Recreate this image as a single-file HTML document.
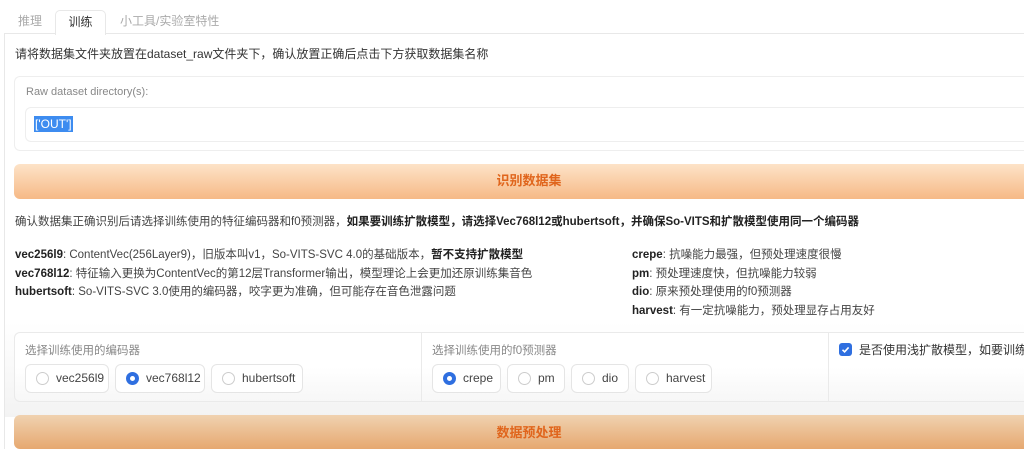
<!DOCTYPE html>
<html><head><meta charset="utf-8"><style>
*,*:before,*:after{box-sizing:border-box;margin:0;padding:0}
html,body{width:1024px;height:449px;overflow:hidden}
body{background:#fff;font-family:"Liberation Sans","Noto Sans CJK SC",sans-serif;color:#333;font-size:12px}
#w{position:relative;width:1024px;height:449px;overflow:hidden}
.a{position:absolute;white-space:nowrap}
.tab{position:absolute;top:10px;height:24px;line-height:22px;font-size:12px;color:#aaa}
.btn{position:absolute;left:14px;width:1010px;border-radius:6px 0 0 6px;background:linear-gradient(#fde3c8,#f6b986);color:#e0651c;font-weight:bold;font-size:13px;text-align:center;line-height:34px;padding-left:20px}
.radio{position:absolute;top:364px;height:29px;border:1px solid #e5e5e5;border-radius:6px;background:#fff;font-size:12px;line-height:27px;color:#444;padding-left:30px}
.radio:before{content:"";position:absolute;left:10px;top:7px;width:13px;height:13px;border:1px solid #ccc;border-radius:50%;background:#fff}
.radio.on:before{border:4px solid #2f6fe0}
b{color:#222}
</style></head><body><div id="w">
<div class="tab" style="left:18px">推理</div>
<div class="a" style="left:55px;top:10px;width:51px;height:25px;border:1px solid #e8e8e8;border-bottom:none;border-radius:5px 5px 0 0;background:#fff;text-align:center;line-height:22px;color:#333;font-size:12px;z-index:2">训练</div>
<div class="tab" style="left:120px">小工具/实验室特性</div>
<div class="a" style="left:4px;top:33px;width:1020px;height:416px;border-left:1px solid #e8e8e8;border-top:1px solid #e8e8e8"></div>
<div class="a" style="left:15px;top:45px;font-size:12px;color:#333">请将数据集文件夹放置在dataset_raw文件夹下，确认放置正确后点击下方获取数据集名称</div>
<div class="a" style="left:14px;top:76px;width:1010px;height:75px;border:1px solid #eee;border-right:none;border-radius:6px 0 0 6px;background:#fff"></div>
<div class="a" style="left:26px;top:86px;font-size:11px;color:#888">Raw dataset directory(s):</div>
<div class="a" style="left:25px;top:107px;width:999px;height:35px;border:1px solid #eee;border-right:none;border-radius:6px 0 0 6px;background:#fff"></div>
<div class="a" style="left:34px;top:116px;background:#3d8cf0;color:#fff;font-size:12px;padding:0 1px;line-height:16px">['OUT']</div>
<div class="btn" style="top:164px;height:35px">识别数据集</div>
<div class="a" style="left:15px;top:213px;font-size:11.5px;color:#444">确认数据集正确识别后请选择训练使用的特征编码器和f0预测器，<b>如果要训练扩散模型，请选择Vec768l12或hubertsoft，并确保So-VITS和扩散模型使用同一个编码器</b></div>
<div class="a" style="left:15px;top:246px;font-size:11.5px;color:#444;line-height:18.5px"><b>vec256l9</b>: ContentVec(256Layer9)，旧版本叫v1，So-VITS-SVC 4.0的基础版本，<b>暂不支持扩散模型</b><br><b>vec768l12</b>: 特征输入更换为ContentVec的第12层Transformer输出，模型理论上会更加还原训练集音色<br><b>hubertsoft</b>: So-VITS-SVC 3.0使用的编码器，咬字更为准确，但可能存在音色泄露问题</div>
<div class="a" style="left:632px;top:246px;font-size:11.5px;color:#444;line-height:18.5px"><b>crepe</b>: 抗噪能力最强，但预处理速度很慢<br><b>pm</b>: 预处理速度快，但抗噪能力较弱<br><b>dio</b>: 原来预处理使用的f0预测器<br><b>harvest</b>: 有一定抗噪能力，预处理显存占用友好</div>
<div class="a" style="left:5px;top:322px;width:1019px;height:95px;background:linear-gradient(#fff,#f3f3f3)"></div>
<div class="a" style="left:14px;top:332px;width:1010px;height:70px;border:1px solid #eaeaea;border-right:none;border-radius:6px 0 0 6px;background:linear-gradient(#fff 50%,#f7f7f7)"></div>
<div class="a" style="left:421px;top:333px;width:1px;height:68px;background:#eaeaea"></div>
<div class="a" style="left:828px;top:333px;width:1px;height:68px;background:#eaeaea"></div>
<div class="a" style="left:25px;top:342px;font-size:11.5px;color:#888">选择训练使用的编码器</div>
<div class="a" style="left:432px;top:342px;font-size:11.5px;color:#888">选择训练使用的f0预测器</div>
<div class="radio" style="left:25px;width:84px">vec256l9</div>
<div class="radio on" style="left:115px;width:90px">vec768l12</div>
<div class="radio" style="left:211px;width:92px">hubertsoft</div>
<div class="radio on" style="left:432px;width:69px">crepe</div>
<div class="radio" style="left:507px;width:58px">pm</div>
<div class="radio" style="left:571px;width:58px">dio</div>
<div class="radio" style="left:635px;width:77px">harvest</div>
<div class="a" style="left:839px;top:343px;width:13px;height:13px;border-radius:3px;background:#2f6fe0"><svg width="13" height="13" viewBox="0 0 13 13" style="display:block"><path d="M3.5 6.8 L5.6 8.8 L9.6 4.4" stroke="#fff" stroke-width="1.6" fill="none"/></svg></div>
<div class="a" style="left:859px;top:341px;width:165px;overflow:hidden;font-size:12px;color:#333">是否使用浅扩散模型，如要训练浅扩散模型请勾选</div>
<div class="btn" style="top:415px;height:34px;line-height:36px;background:linear-gradient(#f0d2b0,#e6a870)">数据预处理</div>
</div></body></html>
